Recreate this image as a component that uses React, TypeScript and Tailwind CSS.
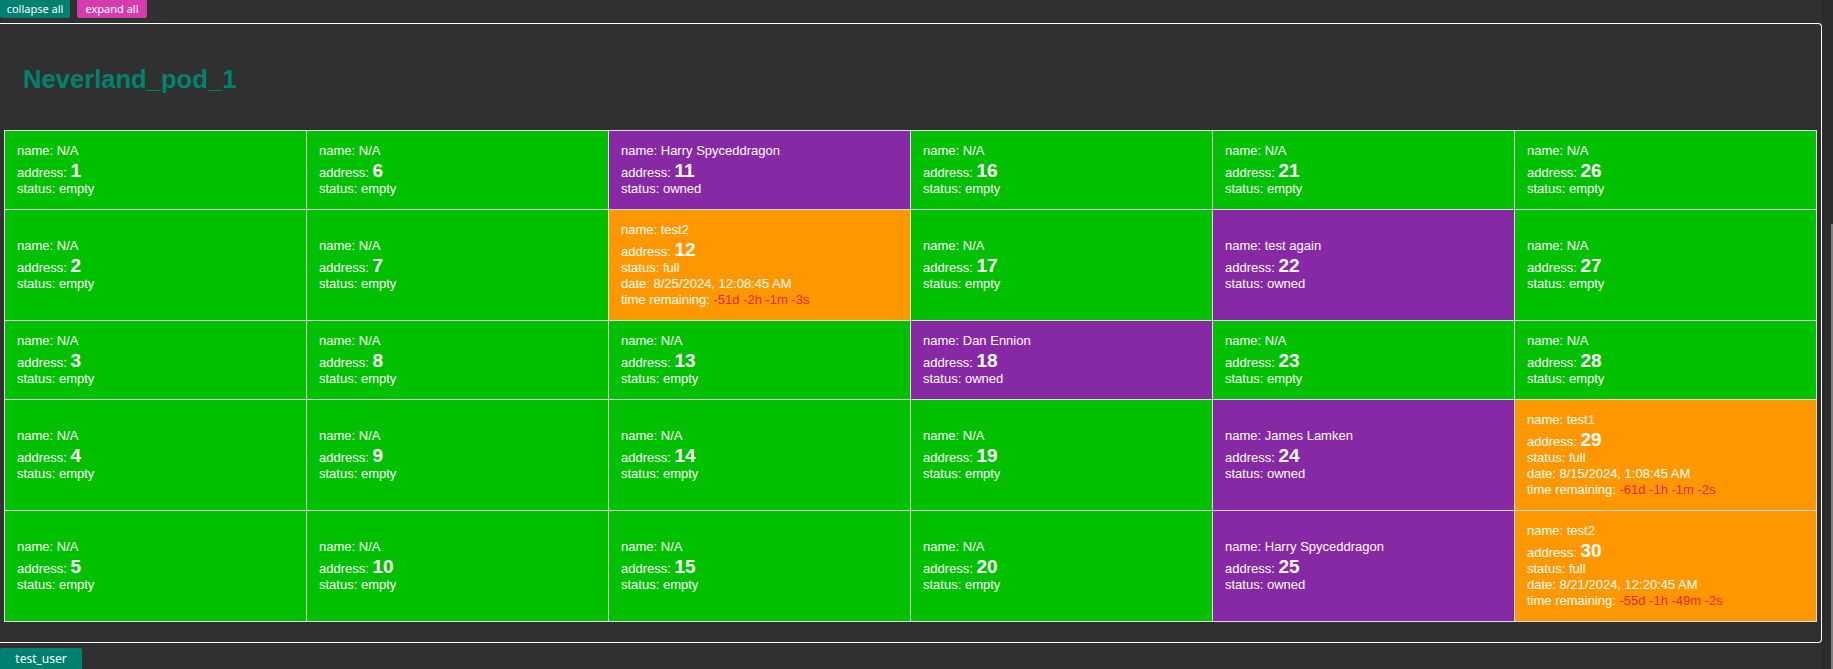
import React from 'react';

type Slot = {
  address: number;
  name: string;
  status: 'empty' | 'owned' | 'full';
  date?: string;
  remaining?: string;
};

const special: Record<number, Omit<Slot, 'address'>> = {
  11: { name: 'Harry Spyceddragon', status: 'owned' },
  12: { name: 'test2', status: 'full', date: '8/25/2024, 12:08:45 AM', remaining: '-51d -2h -1m -3s' },
  18: { name: 'Dan Ennion', status: 'owned' },
  22: { name: 'test again', status: 'owned' },
  24: { name: 'James Lamken', status: 'owned' },
  25: { name: 'Harry Spyceddragon', status: 'owned' },
  29: { name: 'test1', status: 'full', date: '8/15/2024, 1:08:45 AM', remaining: '-61d -1h -1m -2s' },
  30: { name: 'test2', status: 'full', date: '8/21/2024, 12:20:45 AM', remaining: '-55d -1h -49m -2s' },
};

// grid is filled row by row, addresses run down the columns
const slots: Slot[] = [];
for (let r = 0; r < 5; r++) {
  for (let c = 0; c < 6; c++) {
    const address = c * 5 + r + 1;
    slots.push({ address, ...(special[address] ?? { name: 'N/A', status: 'empty' }) });
  }
}

const bg = {
  empty: 'bg-[#00c000]',
  owned: 'bg-[#8729a5]',
  full: 'bg-[#ff9800]',
};

const Cell: React.FC<{ slot: Slot }> = ({ slot }) => (
  <div className={`${bg[slot.status]} flex flex-col justify-center px-3 py-3 text-[13px] leading-[16px] text-white`}>
    <div className="h-[16px]">name: {slot.name}</div>
    <div className="flex h-[22px] items-baseline pt-[2px]">
      <span className="whitespace-pre">address: </span>
      <span className="text-[19px] font-bold leading-none">{slot.address}</span>
    </div>
    <div className="h-[16px]">status: {slot.status}</div>
    {slot.date && <div className="h-[16px]">date: {slot.date}</div>}
    {slot.remaining && (
      <div className="h-[16px]">
        time remaining: <span className="text-[#e0283c]">{slot.remaining}</span>
      </div>
    )}
  </div>
);

export default function App() {
  return (
    <div className="flex h-[669px] w-[1833px] overflow-hidden bg-[#303030]">
      <div className="flex w-[1822px] flex-col">
        {/* toolbar */}
        <div className="flex gap-[7px] font-['Noto_Sans',sans-serif] text-[11px] text-white">
          <button className="flex h-[18px] w-[70px] items-center justify-center rounded-b-[2px] bg-[#00806f]">
            collapse all
          </button>
          <button className="flex h-[18px] w-[70px] items-center justify-center rounded-b-[2px] bg-[#d63bb0]">
            expand all
          </button>
        </div>

        {/* pod panel */}
        <div className="mt-[5px] rounded-r-[4px] border-y border-r border-white px-[4px] pt-[41px] pb-[20px] font-['Liberation_Sans',Arial,sans-serif]">
          <h1 className="mb-[36px] ml-[19px] h-[29px] text-[25.6px] font-bold leading-[29px] text-[#008270]">
            Neverland_pod_1
          </h1>
          <div className="grid grid-cols-6 gap-px bg-[#dcdcdc] p-px">
            {slots.map((s) => (
              <Cell key={s.address} slot={s} />
            ))}
          </div>
        </div>

        {/* user tab */}
        <div className="mt-[5px] flex h-[24px] w-[82px] items-center justify-center rounded-t-[2px] bg-[#00806f] font-['Noto_Sans',sans-serif] text-[12px] text-white">
          test_user
        </div>
      </div>

      {/* scrollbar */}
      <div className="flex w-[11px] justify-end bg-[#2c2c2c]">
        <div className="mt-[224px] w-[2px] bg-[#808080]" />
      </div>
    </div>
  );
}
